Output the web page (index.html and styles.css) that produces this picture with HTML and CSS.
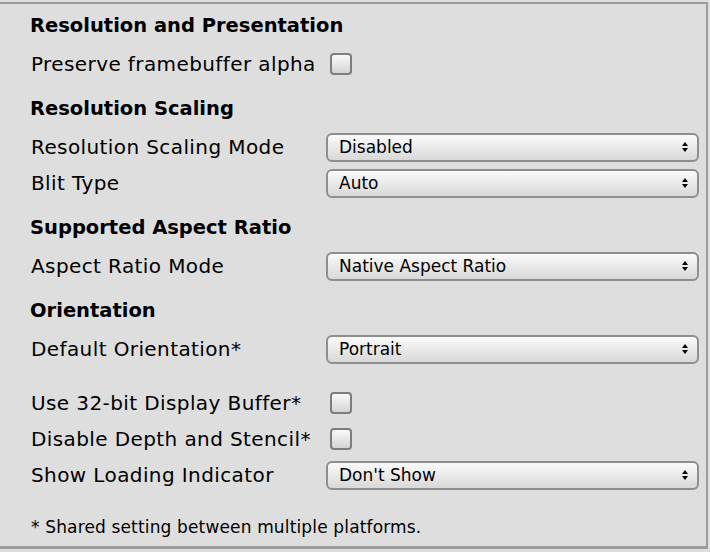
FILE: index.html
```html
<!DOCTYPE html>
<html lang="en">
<head>
  <meta charset="UTF-8">
  <title>Resolution and Presentation</title>
  <link rel="stylesheet" href="styles.css">
</head>
<body>
  <div class="panel">
    <div class="heading">Resolution and Presentation</div>
    <div class="row">
      <span class="label">Preserve framebuffer alpha</span>
      <span class="check"></span>
    </div>

    <div class="heading section">Resolution Scaling</div>
    <div class="row">
      <span class="label">Resolution Scaling Mode</span>
      <div class="select">Disabled<span class="arrows"></span></div>
    </div>
    <div class="row">
      <span class="label">Blit Type</span>
      <div class="select">Auto<span class="arrows"></span></div>
    </div>

    <div class="heading section">Supported Aspect Ratio</div>
    <div class="row">
      <span class="label">Aspect Ratio Mode</span>
      <div class="select">Native Aspect Ratio<span class="arrows"></span></div>
    </div>

    <div class="heading section">Orientation</div>
    <div class="row">
      <span class="label">Default Orientation*</span>
      <div class="select">Portrait<span class="arrows"></span></div>
    </div>

    <div class="spacer"></div>
    <div class="row">
      <span class="label">Use 32-bit Display Buffer*</span>
      <span class="check"></span>
    </div>
    <div class="row">
      <span class="label">Disable Depth and Stencil*</span>
      <span class="check"></span>
    </div>
    <div class="row">
      <span class="label">Show Loading Indicator</span>
      <div class="select">Don't Show<span class="arrows"></span></div>
    </div>

    <div class="note">* Shared setting between multiple platforms.</div>
  </div>
</body>
</html>
```

FILE: styles.css
```css
html, body {
  margin: 0;
  background: #dedede;
}
body {
  font-family: "DejaVu Sans", sans-serif;
  color: #000;
  overflow: hidden;
}
.panel {
  margin: 2px 2px 0 -4px;
  height: 547px;
  box-sizing: border-box;
  border: 2px solid #9c9c9c;
  border-bottom-width: 3px;
  padding-left: 32px;
  padding-right: 7px;
  background: #dedede;
}
.heading {
  padding-top: 3px;
  line-height: 41px;
  margin-top: -2px;
  font-size: 19.5px;
  font-weight: bold;
}
.section { margin-top: 3px; }
.row {
  display: grid;
  grid-template-columns: 296px 1fr;
  align-items: center;
  height: 36px;
  font-size: 20px;
  letter-spacing: 0.4px;
}
.label { padding-left: 1px; white-space: nowrap; }
.check {
  width: 18px;
  height: 18px;
  margin-left: 4px;
  border: 2px solid #7d7d7d;
  border-radius: 4px;
  background: linear-gradient(#fafafa, #d4d4d4);
}
.select {
  position: relative;
  height: 25px;
  line-height: 25px;
  border: 2px solid #8e8e8e;
  border-radius: 6px;
  padding-left: 11px;
  font-size: 17px;
  letter-spacing: 0;
  background: linear-gradient(#fbfbfb, #e9e9e9 50%, #d8d8d8);
}
.arrows {
  position: absolute;
  right: 9px;
  top: 7px;
  width: 0;
  height: 0;
  border-left: 3px solid transparent;
  border-right: 3px solid transparent;
  border-bottom: 4px solid #000;
}
.arrows::after {
  content: "";
  position: absolute;
  left: -3px;
  top: 6px;
  border-left: 3px solid transparent;
  border-right: 3px solid transparent;
  border-top: 4px solid #000;
}
.spacer { height: 18px; }
.note {
  margin-top: 24px;
  line-height: 20px;
  font-size: 17px;
  letter-spacing: 0.15px;
  padding-left: 1px;
}
```
